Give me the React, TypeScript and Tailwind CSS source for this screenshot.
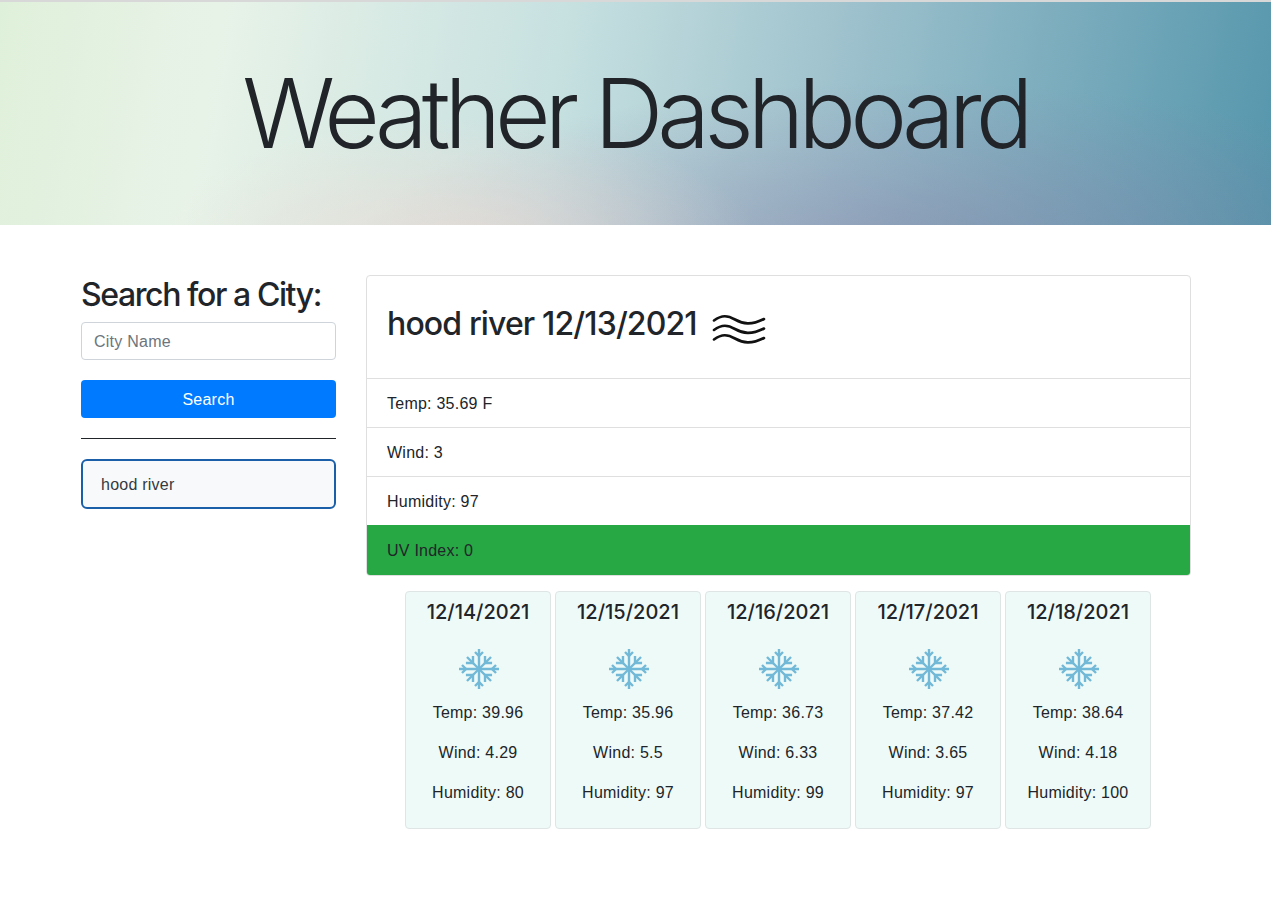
const forecast = [
  { date: "12/14/2021", temp: "39.96", wind: "4.29", humidity: "80" },
  { date: "12/15/2021", temp: "35.96", wind: "5.5", humidity: "97" },
  { date: "12/16/2021", temp: "36.73", wind: "6.33", humidity: "99" },
  { date: "12/17/2021", temp: "37.42", wind: "3.65", humidity: "97" },
  { date: "12/18/2021", temp: "38.64", wind: "4.18", humidity: "100" },
];

const Waves = () => (
  <svg width="56" height="40" viewBox="0 0 56 40" fill="none" stroke="#111" strokeWidth="2.6" strokeLinecap="round">
    <path d="M3 11.500C11 5.500 17 6.500 24 10.500C32 15 40 16.500 53 10" />
    <path d="M3 21C11 15 17 16 24 20C32 24.500 40 26 53 19.500" />
    <path d="M3 30.500C11 24.500 17 25.500 24 29.500C32 34 40 35.500 53 29" />
  </svg>
);

const Snowflake = () => (
  <svg width="40" height="40" viewBox="0 0 40 40" fill="none" stroke="#72b9d8" strokeWidth="2.400">
    {[0, 90].map((a) => (
      <g key={a} transform={`rotate(${a} 20 20)`}>
        <path d="M20 0V40" />
        <path d="M16 3L20 7L24 3" />
        <path d="M16 37L20 33L24 37" />
      </g>
    ))}
    {[45, 135].map((a) => (
      <g key={a} transform={`rotate(${a} 20 20)`}>
        <path d="M20 3V37" />
        <path d="M15 6.500L20 11.500L25 6.500" />
        <path d="M15 33.500L20 28.500L25 33.500" />
      </g>
    ))}
  </svg>
);

const App = () => {
  return (
    <div className="min-h-[905px] bg-white font-['Liberation_Sans',Arial,sans-serif] text-[16px] tracking-[0.015em] text-[#212529]">
      <header className="mb-[50px] flex h-[225px] items-center justify-center border-t-2 border-[#d8d8d8] bg-[radial-gradient(ellipse_300px_130px_at_36%_110%,rgba(238,220,212,0.75),rgba(238,220,212,0)),radial-gradient(ellipse_560px_170px_at_72%_112%,rgba(135,125,165,0.5),rgba(135,125,165,0)),linear-gradient(100deg,#dff0da_0%,#e8f3e8_17%,#c6e0e0_44%,#9cc0cc_66%,#5596ac_100%)]">
        <h1 className="-ml-px font-['Inter',sans-serif] text-[96px] leading-[1.2] font-light tracking-[-0.062em]">
          Weather Dashboard
        </h1>
      </header>

      <main className="flex gap-[30px] pr-[80px] pl-[81px]">
        <aside className="w-[255px] shrink-0">
          <h2 className="mb-[7px] font-['Inter',sans-serif] text-[32px] leading-[40px] font-medium tracking-[-0.044em] whitespace-nowrap">
            Search for a City:
          </h2>
          <input
            className="block h-[38px] w-full rounded border border-[#ced4da] bg-white px-3 pt-px text-[16px] placeholder:text-[#6c757d]"
            placeholder="City Name"
          />
          <button className="mt-5 block h-[38px] w-full rounded bg-[#007bff] pt-px text-[16px] text-white">Search</button>
          <hr className="mt-5 border-t border-[#212529]" />
          <div className="mt-5 flex h-[50px] items-center rounded-md border-2 border-[#1a5fa8] bg-[#f8f9fa] px-[18px] pt-px text-[#343a40]">
            hood river
          </div>
        </aside>

        <section className="w-[825px]">
          <div className="overflow-hidden rounded border border-[#dfdfdf]">
            <div className="flex h-[103px] items-start gap-[14px] border-b border-[#dfdfdf] px-5 pt-[29px]">
              <h2 className="font-['Inter',sans-serif] text-[32px] leading-[38px] font-medium tracking-[-0.027em]">
                hood river 12/13/2021
              </h2>
              <div className="mt-[4px]">
                <Waves />
              </div>
            </div>
            <div className="flex h-[49px] items-center border-b border-[#dfdfdf] px-5 pt-px">Temp: 35.69 F</div>
            <div className="flex h-[49px] items-center border-b border-[#dfdfdf] px-5 pt-px">Wind: 3</div>
            <div className="flex h-[48px] items-center px-5 pt-px">Humidity: 97</div>
            <div className="flex h-[50px] items-center bg-[#28a745] px-5 pt-px">UV Index: 0</div>
          </div>

          <div className="mt-[15px] flex gap-1 pl-[39px]">
            {forecast.map((day) => (
              <div
                key={day.date}
                className="flex h-[238px] w-[146px] flex-col items-center rounded border border-[#dfe5e5] bg-[#eefaf8] pt-2"
              >
                <h5 className="font-['Inter',sans-serif] text-[20px] leading-6 font-medium tracking-normal">{day.date}</h5>
                <div className="mt-[25px] ml-px">
                  <Snowflake />
                </div>
                <p className="mt-3 leading-6">Temp: {day.temp}</p>
                <p className="mt-4 leading-6">Wind: {day.wind}</p>
                <p className="mt-4 leading-6">Humidity: {day.humidity}</p>
              </div>
            ))}
          </div>
        </section>
      </main>
    </div>
  );
};

export default App;
